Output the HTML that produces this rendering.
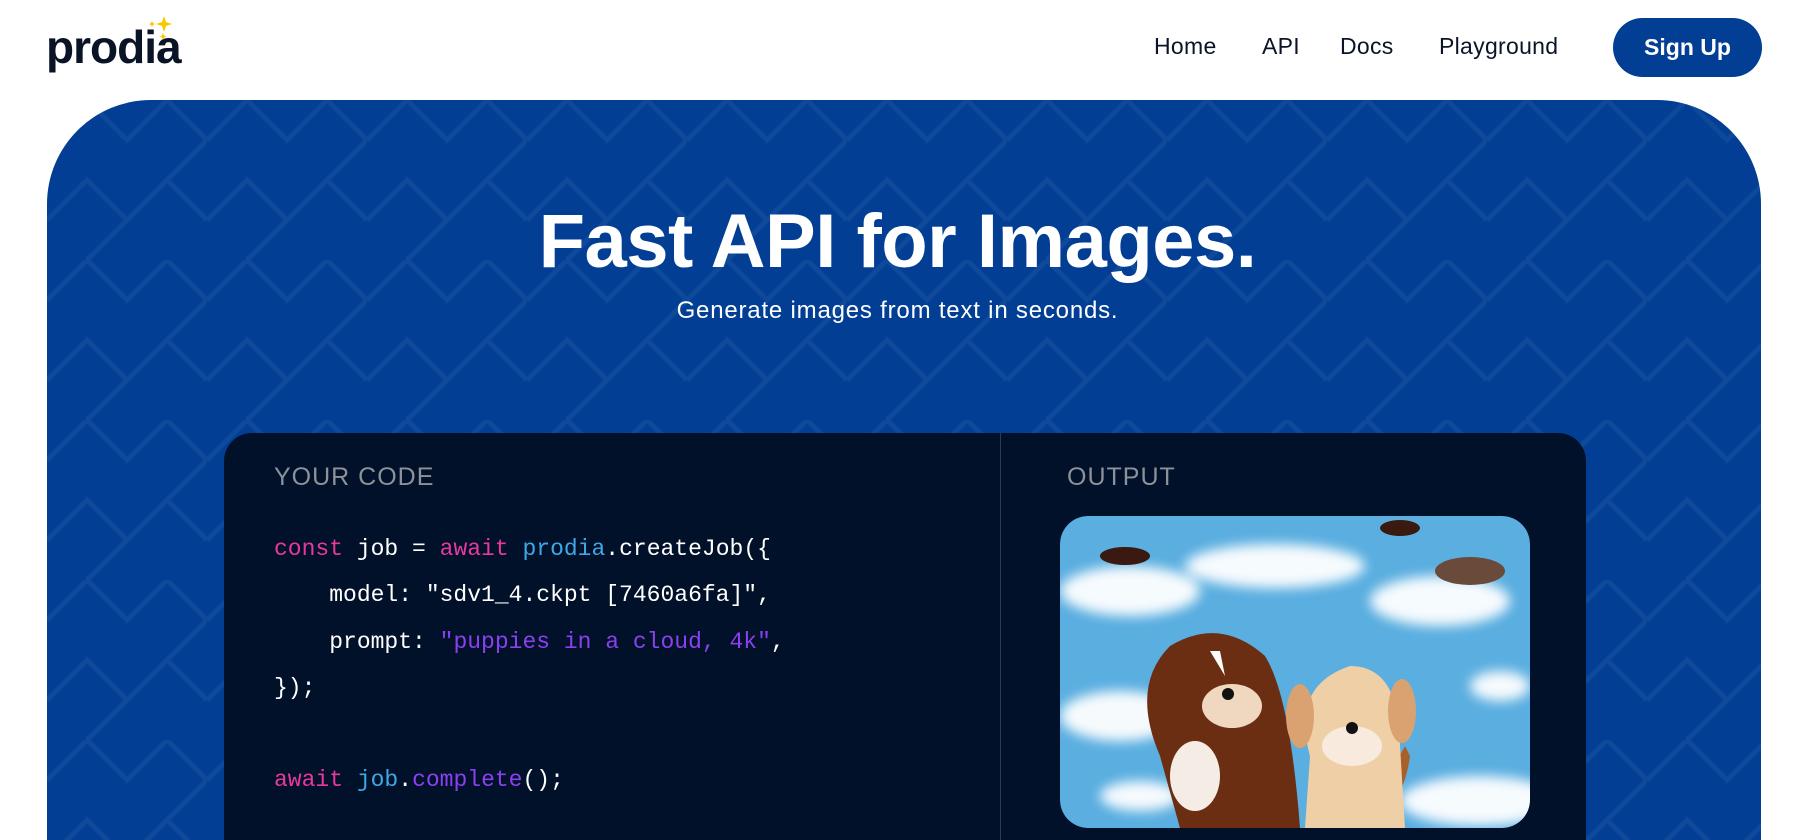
<!DOCTYPE html>
<html><head><meta charset="utf-8"><style>
*{margin:0;padding:0;box-sizing:border-box}
html,body{width:1795px;height:840px;overflow:hidden}
body{background:#fff;font-family:"Liberation Sans",sans-serif;position:relative}
.logo{position:absolute;left:46px;top:20px;font-size:46px;font-weight:bold;color:#0b1426;letter-spacing:-1px}
.nav a{position:absolute;top:33px;font-size:23px;color:#0b1426;text-decoration:none;letter-spacing:0.3px}
.btn{position:absolute;left:1613px;top:18px;width:149px;height:59px;border-radius:30px;background:#023f94;color:#fff;font-size:23px;font-weight:bold;text-align:center;line-height:59px}
.hero{position:absolute;left:47px;top:100px;width:1714px;height:740px;border-radius:104px 104px 0 0;background:#023f94;overflow:hidden}
h1{position:absolute;left:0;width:1795px;top:198px;text-align:center;color:#fff;font-size:76px;font-weight:bold;letter-spacing:-0.5px}
.sub{position:absolute;left:0;width:1795px;top:297px;text-align:center;color:#fff;font-size:24px;letter-spacing:0.8px}
.card{position:absolute;left:224px;top:433px;width:1362px;height:407px;border-radius:28px 28px 0 0;background:#001129;overflow:hidden}
.div{position:absolute;left:776px;top:0;width:1px;height:100%;background:#2c3a52}
.lbl{position:absolute;top:30px;color:#8d9199;font-size:25px;letter-spacing:1px}
.code{position:absolute;left:50px;top:93px;font-family:"Liberation Mono",monospace;font-size:23px;line-height:46.3px;color:#fff;white-space:pre}
.k{color:#e8389e}.b{color:#3ea8e6}.p{color:#8a3ff0}
</style></head><body>
<div class="logo">prodia</div>
<svg style="position:absolute;left:144px;top:14px" width="32" height="32" viewBox="0 0 32 32"><path d="M20 2 L22 8 L28 10 L22 12 L20 18 L18 12 L12 10 L18 8Z" fill="#f7c900"/><path d="M8 7 L9 9 L11 10 L9 11 L8 13 L7 11 L5 10 L7 9Z" fill="#f7c900"/><path d="M19 19 L20 21.5 L22.5 22.5 L20 23.5 L19 26 L18 23.5 L15.5 22.5 L18 21.5Z" fill="#f7c900"/></svg>
<div class="nav"><a style="left:1154px">Home</a><a style="left:1262px">API</a><a style="left:1340px">Docs</a><a style="left:1439px">Playground</a></div>
<div class="btn">Sign Up</div>
<div class="hero">
<svg width="1714" height="740" style="position:absolute;left:0;top:0;opacity:0.05">
<defs><pattern id="pt" width="160" height="160" patternUnits="userSpaceOnUse"><path d="M0 40 L40 0 M40 0 L80 40 L120 0 M120 0 L160 40 M0 120 L40 80 L80 120 L40 160 M80 120 L120 80 L160 120 M120 80 L160 40" stroke="#fff" stroke-width="5" fill="none"/></pattern></defs>
<rect width="1714" height="740" fill="url(#pt)"/></svg>
</div>
<h1>Fast API for Images.</h1>
<div class="sub">Generate images from text in seconds.</div>
<div class="card">
<div class="div"></div>
<div class="lbl" style="left:50px">YOUR CODE</div>
<div class="lbl" style="left:843px">OUTPUT</div>
<div class="code"><span class="k">const</span> job = <span class="k">await</span> <span class="b">prodia</span>.createJob({
    model: "sdv1_4.ckpt [7460a6fa]",
    prompt: <span class="p">"puppies in a cloud, 4k"</span>,
});

<span class="k">await</span> <span class="b">job</span>.<span class="p">complete</span>();</div>
<svg style="position:absolute;left:836px;top:83px;border-radius:28px" width="470" height="312" viewBox="0 0 470 312">
<defs><filter id="bl"><feGaussianBlur stdDeviation="6"/></filter><clipPath id="c"><rect width="470" height="312" rx="28"/></clipPath></defs>
<g clip-path="url(#c)">
<rect width="470" height="312" fill="#5aaee0"/>
<g fill="#fff" filter="url(#bl)" opacity="0.95">
<ellipse cx="70" cy="75" rx="70" ry="25"/><ellipse cx="215" cy="50" rx="90" ry="22"/><ellipse cx="380" cy="85" rx="70" ry="25"/>
<ellipse cx="60" cy="200" rx="60" ry="25"/><ellipse cx="440" cy="170" rx="30" ry="15"/><ellipse cx="420" cy="285" rx="80" ry="25"/><ellipse cx="80" cy="280" rx="40" ry="15"/>
</g>
<g fill="#3a1a10"><ellipse cx="65" cy="40" rx="25" ry="9"/><ellipse cx="340" cy="12" rx="20" ry="8"/><ellipse cx="410" cy="55" rx="35" ry="14" fill="#6a4a3a"/></g>
<path d="M120 312 L100 240 Q70 170 110 130 Q160 100 205 140 Q230 180 240 312Z" fill="#6b2e12"/>
<path d="M150 135 L165 160 L160 135Z" fill="#fff"/>
<ellipse cx="172" cy="190" rx="30" ry="22" fill="#f0d8c0"/>
<ellipse cx="135" cy="260" rx="25" ry="35" fill="#f5ede5"/>
<circle cx="168" cy="178" r="6" fill="#111"/>
<path d="M300 280 Q330 260 345 230 L350 240 Q345 280 320 300Z" fill="#a8602a"/>
<path d="M245 312 L250 240 Q230 170 290 150 Q340 150 340 230 L345 312Z" fill="#eecfa6"/>
<ellipse cx="240" cy="200" rx="14" ry="32" fill="#d9a270"/><ellipse cx="342" cy="195" rx="14" ry="32" fill="#d9a270"/>
<ellipse cx="292" cy="230" rx="30" ry="20" fill="#f8eadc"/>
<circle cx="292" cy="212" r="6" fill="#111"/>
</g></svg>
</div>
</body></html>
